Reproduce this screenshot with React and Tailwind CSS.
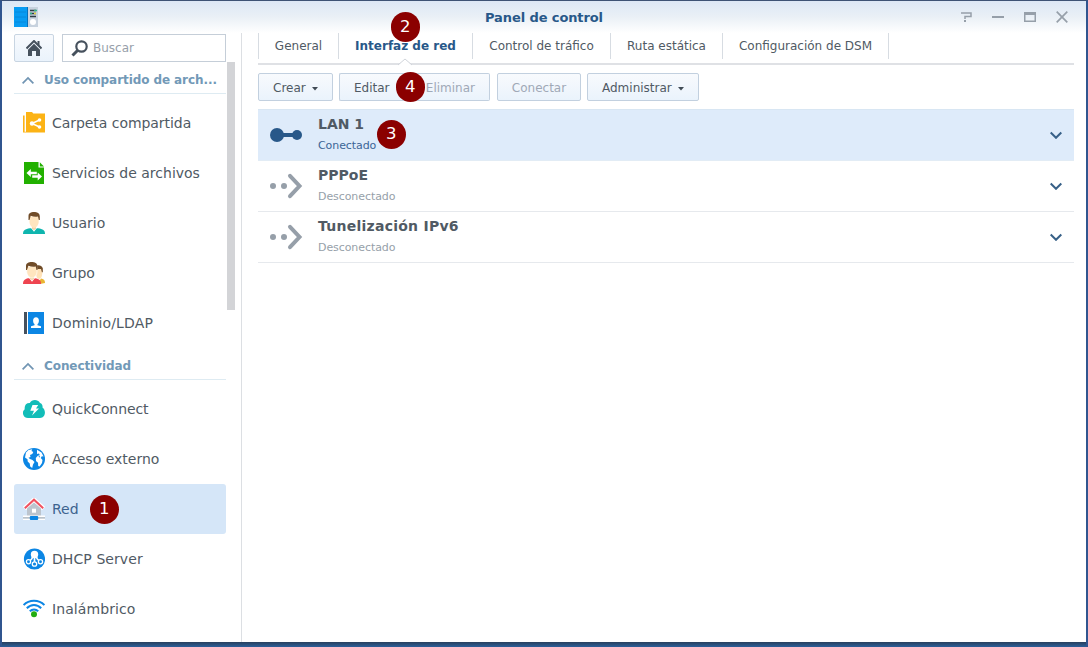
import React from "react";

const badgeBase =
  "absolute z-10 flex h-[29.5px] w-[29.5px] items-center justify-center rounded-full bg-[#8b0000] text-[16.5px] leading-none font-normal tracking-normal text-white";

function Badge({ n, className }) {
  return <span className={`${badgeBase} ${className}`}>{n}</span>;
}

function Svg({ children }) {
  return (
    <svg width="22" height="22" viewBox="0 0 22 22" className="block shrink-0">
      {children}
    </svg>
  );
}

const FolderIcon = () => (
  <Svg>
    <path d="M0 3.500h1.600v16.200H22V20.500H0z" fill="#fcb315" />
    <path d="M3 0h6l1.300 1.500H22v18.500H3z" fill="#fcb315" />
    <path d="M16.500 8L9 11.500l7.500 3.500" stroke="#fff" strokeWidth="1.500" fill="none" />
    <circle cx="9" cy="11.500" r="2.200" fill="#fff" />
    <circle cx="16.500" cy="8" r="1.800" fill="#fff" />
    <circle cx="16.500" cy="15" r="1.800" fill="#fff" />
  </Svg>
);

const FileServiceIcon = () => (
  <Svg>
    <path d="M1 0h14.500v5.500H21V22H1z" fill="#22b000" />
    <path d="M16.800.3L21 4.500h-4.200z" fill="#22b000" />
    <path d="M3.500 11l4.300-4v2.700h6v2.500h-6V15z" fill="#fff" />
    <path d="M19 14.500l-4.300-4v2.700H9.200v2.600h5.500v2.700z" fill="#fff" />
  </Svg>
);

const UserIcon = () => (
  <Svg>
    <path d="M0 22c0-3.800 2-4.900 7-5.700h8c5 .8 7 1.900 7 5.700z" fill="#0fb5ae" />
    <path d="M8 16l3 3.800 3-3.800-1-1H9z" fill="#fff" />
    <path d="M9 13h4v3.300L11 18.500l-2-2.200z" fill="#f3d3a6" />
    <path d="M6.500 4.500h9.200v5.300c0 3.200-2.300 6.200-4.600 6.200s-4.600-3-4.600-6.200z" fill="#ffe5bf" />
    <path d="M5.500 8V4C5.500 1 8 0 11 0s5.800 1 5.800 4.500V8h-1l-.8-3.500c-2.500.5-5 .2-7.300-.7L6.500 8z" fill="#704c28" />
  </Svg>
);

const GroupIcon = () => (
  <Svg>
    <path d="M17 22v-4l1-1.500c2.500.8 4 1.500 4 4v.5z" fill="#e9b532" />
    <path d="M13 6h6.300v5c0 3-1.300 6-3.300 6s-3-3-3-6z" fill="#ffe2b8" />
    <path d="M14 3.400c2-.6 5 0 5.800 2.800v4h-.9L18 7h-4z" fill="#704c28" />
    <path d="M0 22c0-3.800 2-4.900 5-5.700h7c4.500.8 6 1.900 6 5.700z" fill="#ee4450" />
    <path d="M6 16l3 3.800 3-3.800-1-1H7z" fill="#fff" />
    <path d="M7 13h4v3.300l-2 2.200-2-2.200z" fill="#f3d3a6" />
    <path d="M3.800 4.500h10.200v5.300c0 3.200-2.500 6.200-5.100 6.200S3.800 13 3.800 9.800z" fill="#ffe5bf" stroke="#fff" strokeWidth=".6" />
    <path d="M3 8V4c0-3 2.700-4 5.700-4s5.800 1 5.800 4.500V8h-1l-.8-3.500c-2.500.5-5 .2-7.300-.7L4 8z" fill="#704c28" />
  </Svg>
);

const DomainIcon = () => (
  <Svg>
    <path d="M1 0h3v22H1z" fill="#46515d" />
    <path d="M5 0h16v22H5z" fill="#0c86e4" />
    <ellipse cx="13" cy="8.800" rx="2.900" ry="3.500" fill="#fff" />
    <path d="M11.500 11h3v2.300l3.500 1V16H8v-1.700l3.500-1z" fill="#fff" />
  </Svg>
);

const QuickConnectIcon = () => (
  <Svg>
    <path
      d="M5 20a5 5 0 0 1-3.300-8.800C1.200 7 3.500 4.800 6.800 5 8.500 1.500 14.500.7 17 5c2.200.7 2.800 2.500 2.500 4.500C23.500 12.500 22.500 20 17 20z"
      fill="#12bdb8"
    />
    <path d="M9.500 7h5.700L13 10.500h3L9 17.500l2-4.800H7.300z" fill="#fff" />
  </Svg>
);

const GlobeIcon = () => (
  <Svg>
    <circle cx="11" cy="11" r="11" fill="#0c86e4" />
    <path d="M3 4.500L5.500 2l3.700-.8L8.500 3l1.800 1-1 2-2.300 1 .5 2-2 .8 1.500 1.200 2.500 1 2 2-1.500 2.500-.8 3.500-2-1.500-.5-3-2-2-.2-2.300L2 9.500z" fill="#fff" />
    <path d="M14 1.700l4.500 2.800 2 4-1.700-.3-1 1.800 1.700 2-.5 3-2.400 3.500-1.400-.5-.2-3.200-2-1.800-.2-3 2-2.300 2-.5-.8-1.700-2 .5z" fill="#fff" />
    <path d="M15.500 8l1.500.3-.5 1.500z" fill="#0c86e4" />
  </Svg>
);

const NetworkIcon = () => (
  <Svg>
    <path d="M1.500 10.500L11 1.700l9.500 8.800" stroke="#fff" strokeWidth="4.500" fill="none" />
    <path d="M4 10.500L11 4.500l7 6V18H4z" fill="#bcc4cd" />
    <path d="M1.800 10.300L11 1.700l9.200 8.600" stroke="#f15260" strokeWidth="2" fill="none" />
    <path d="M9 10.700h4v4H9z" fill="#fff" />
    <path d="M0 17.500h22V22H0z" fill="#fff" />
    <path d="M0 19h22v1.700H0z" fill="#b9c2ca" />
    <rect x="6.800" y="18" width="8.400" height="4" rx="1" fill="#0c86e4" />
  </Svg>
);

const DhcpIcon = () => (
  <Svg>
    <circle cx="11.500" cy="11" r="10.600" fill="#0c86e4" />
    <circle cx="11.500" cy="6.500" r="3.700" fill="#fff" />
    <path d="M9.500 8.500c0 3-1.500 3.500-3 4.500M11.500 9v6M13.500 8.500c0 3 1.500 3.500 3 4.500" stroke="#fff" strokeWidth="1.700" fill="none" />
    <g fill="#0c86e4" stroke="#fff" strokeWidth="1.300">
      <circle cx="5.500" cy="13.700" r="2.100" />
      <circle cx="11.500" cy="16" r="2.200" />
      <circle cx="17.500" cy="13.700" r="2.100" />
    </g>
  </Svg>
);

const WifiIcon = () => (
  <Svg>
    <g fill="none" stroke="#0c86e4" strokeWidth="2">
      <path d="M.6 7C6 1.200 16 1.200 21.400 7" />
      <path d="M3.800 10.300C8 6 14 6 18.200 10.300" />
      <path d="M6.800 13.300c2.500-2.500 6-2.500 8.400 0" />
    </g>
    <circle cx="11" cy="16.200" r="3" fill="#22ac10" />
  </Svg>
);

function SectionHeader({ children }) {
  return (
    <div className="mb-1 flex h-8 items-center border-b border-[#deebf2] pt-[5px] pl-2">
      <svg width="12" height="8" viewBox="0 0 12 8" className="mr-[10px] shrink-0">
        <path d="M.6 7.300L6 1.900l5.400 5.400" fill="none" stroke="#7195b3" strokeWidth="1.800" />
      </svg>
      <span className="text-[12px] font-bold tracking-[-0.08px] whitespace-nowrap text-[#7299b7]">{children}</span>
    </div>
  );
}

function NavItem({ icon, children, active, spacing = "", badge }) {
  return (
    <div
      className={`relative flex h-[50px] items-center rounded-[3px] pl-[9px] ${
        active ? "bg-[#d5e6f8] text-[#3d638f]" : "text-[#505a64]"
      }`}
    >
      {icon}
      <span className={`ml-[7px] text-[14px] whitespace-nowrap ${spacing}`}>{children}</span>
      {badge}
    </div>
  );
}

function Tab({ children, width, active, badge }) {
  return (
    <div className={`relative flex h-[26px] items-center justify-center border-r border-[#d7dce2] ${width}`}>
      <span className={`whitespace-nowrap ${active ? "font-bold text-[#285889]" : "text-[#505a64]"}`}>{children}</span>
      {active && (
        <svg width="14" height="8" viewBox="0 0 14 8" className="absolute -bottom-[7px] left-[59px]">
          <path d="M0 7.500L7 1l7 6.500z" fill="#fff" />
          <path d="M0 7L7 1l7 6" fill="none" stroke="#d0d4da" />
        </svg>
      )}
      {badge}
    </div>
  );
}

const buttonBase =
  "relative flex h-7 items-center border border-[#c2d0df] bg-linear-to-b from-[#f8fafd] to-[#eaf3fc] pt-px whitespace-nowrap";

const Caret = () => (
  <svg width="6" height="4" viewBox="0 0 6 4" className="mt-[3px] ml-[6px] shrink-0">
    <path d="M0 0h6L3 3.500z" fill="#414b55" />
  </svg>
);

const Connected = () => (
  <svg width="34" height="28" viewBox="0 0 34 28" className="block">
    <path d="M8 14h20" stroke="#285889" strokeWidth="4" />
    <circle cx="8" cy="14" r="7" fill="#285889" />
    <circle cx="28" cy="14" r="5" fill="#285889" />
  </svg>
);

const Disconnected = () => (
  <svg width="34" height="28" viewBox="0 0 34 28" className="block">
    <circle cx="4" cy="14" r="3" fill="#969fa9" />
    <circle cx="15" cy="14" r="3" fill="#969fa9" />
    <path d="M21 3.800L30.500 14 21 24.200" fill="none" stroke="#969fa9" strokeWidth="4" strokeLinecap="round" />
  </svg>
);

function InterfaceRow({ name, status, connected, spacing = "", badge }) {
  return (
    <div
      className={`relative flex h-[51px] items-center border-b pr-3 pl-[11px] ${
        connected ? "border-[#e2ecf5] bg-[#deebfa]" : "border-[#e6e9ed]"
      }`}
    >
      <div className="w-[49px]">{connected ? <Connected /> : <Disconnected />}</div>
      <div className="flex flex-1 flex-col">
        <span className={`text-[14px] leading-[21px] font-bold text-[#505a64] ${spacing}`}>{name}</span>
        <span
          className={`text-[11px] leading-[21px] tracking-[-0.08px] ${connected ? "text-[#3b6596]" : "text-[#969fa9]"}`}
        >
          {status}
        </span>
      </div>
      <svg width="12" height="8" viewBox="0 0 12 8">
        <path d="M.7 1.500L6 6.800l5.300-5.300" fill="none" stroke="#376087" strokeWidth="2" />
      </svg>
      {badge}
    </div>
  );
}

function TitleBar() {
  return (
    <header className="flex h-8 shrink-0 items-center bg-linear-to-b from-[#dce7f5] via-[#eaf0f6] to-white pr-[18px] pl-3">
      <svg width="24" height="20" viewBox="0 0 24 20">
        <path d="M0 0h13v20H0z" fill="#079bf2" />
        <path d="M13 0h1v20h-1z" fill="#056fba" />
        <path d="M14 0h10v20H14z" fill="#c7d2de" />
        <path d="M1 5h11M1 10h11M1 15h11" stroke="#0788da" />
        <path d="M16 3.500h6M16 6.500h6M16 9.500h6" stroke="#303c46" strokeWidth="1.500" />
        <path d="M20 3.500h3M16 6.500h2" stroke="#32b58b" strokeWidth="1.500" />
        <path d="M20 6.500h2" stroke="#e2d33e" strokeWidth="1.500" />
        <circle cx="19" cy="15" r="3" fill="#fff" />
      </svg>
      <h1 className="flex-1 pt-px pl-[90px] text-center text-[13px] font-bold text-[#285889]">
        <span className="tracking-[-0.1px]">Panel de control</span>
      </h1>
      <div className="flex items-center gap-5 text-[#969fa9]">
        <svg width="12" height="12" viewBox="0 0 12 12" className="block" fill="none" stroke="currentColor">
          <path d="M1 2h10v3.500H5V8" strokeWidth="1.500" />
          <path d="M4 10h2" strokeWidth="2" />
        </svg>
        <svg width="12" height="12" viewBox="0 0 12 12" className="block">
          <path d="M0 5h12v2H0z" fill="currentColor" />
        </svg>
        <svg width="12" height="12" viewBox="0 0 12 12" className="block">
          <path d="M0 1h12v10H0zM1.500 4v5.500h9V4z" fill="currentColor" fillRule="evenodd" />
        </svg>
        <svg width="12" height="12" viewBox="0 0 12 12" className="block">
          <path d="M.7.7l10.600 10.600M11.300.7L.7 11.300" stroke="currentColor" strokeWidth="1.700" />
        </svg>
      </div>
    </header>
  );
}

function Sidebar() {
  return (
    <aside className="flex w-[240px] shrink-0 flex-col border-r border-[#dcdfe3] pl-3">
      <div className="flex h-[29px] pt-px">
        <button className="flex h-7 w-10 items-center justify-center rounded-[2px] border border-[#c8d5e2] bg-linear-to-b from-[#f8fafd] to-[#eaf3fc]">
          <svg width="16" height="16" viewBox="0 0 16 16">
            <path d="M.5 8.500L8 1l7.500 7.500" fill="none" stroke="#46515d" strokeWidth="2" />
            <path d="M2 9.700l6-6 6 6V16h-4v-5H6v5H2zM11.500 1h2v4h-2z" fill="#46515d" />
          </svg>
        </button>
        <div className="ml-2 flex h-7 w-[164px] items-center border border-[#c5ced8] bg-white pl-2">
          <svg width="17" height="17" viewBox="0 0 17 17" fill="none" stroke="#46515d">
            <circle cx="10.500" cy="6.500" r="5.200" strokeWidth="2.200" />
            <path d="M6.500 10.500L1.500 15.500" strokeWidth="3" />
          </svg>
          <span className="ml-[5px] text-[12px] text-[#979faa]">Buscar</span>
        </div>
      </div>
      <div className="flex">
        <nav className="w-[212px]">
          <SectionHeader>Uso compartido de arch...</SectionHeader>
          <NavItem icon={<FolderIcon />} spacing="tracking-[-0.05px]">Carpeta compartida</NavItem>
          <NavItem icon={<FileServiceIcon />}>Servicios de archivos</NavItem>
          <NavItem icon={<UserIcon />}>Usuario</NavItem>
          <NavItem icon={<GroupIcon />}>Grupo</NavItem>
          <NavItem icon={<DomainIcon />} spacing="tracking-[0.15px]">Dominio/LDAP</NavItem>
          <SectionHeader>Conectividad</SectionHeader>
          <NavItem icon={<QuickConnectIcon />} spacing="tracking-[-0.08px]">QuickConnect</NavItem>
          <NavItem icon={<GlobeIcon />}>Acceso externo</NavItem>
          <NavItem icon={<NetworkIcon />} active badge={<Badge n="1" className="top-[10.5px] left-[75.5px]" />}>
            Red
          </NavItem>
          <NavItem icon={<DhcpIcon />} spacing="tracking-[0.08px]">DHCP Server</NavItem>
          <NavItem icon={<WifiIcon />} spacing="tracking-[0.08px]">Inalámbrico</NavItem>
        </nav>
        <div className="ml-px h-[248px] w-2 bg-[#d3d4d7]" />
      </div>
    </aside>
  );
}

function MainPanel() {
  return (
    <main className="flex flex-1 flex-col pr-3 pl-4">
      <div className="flex h-8 border-b-2 border-[#dfe1e5] text-[12px]">
        <div className="h-[26px] w-px bg-[#d7dce2]" />
        <Tab width="w-20">General</Tab>
        <Tab width="w-[134px]" active badge={<Badge n="2" className="-top-[21px] left-[51.5px]" />}>
          Interfaz de red
        </Tab>
        <Tab width="w-[138px]">Control de tráfico</Tab>
        <Tab width="w-28">Ruta estática</Tab>
        <Tab width="w-[166px]">Configuración de DSM</Tab>
      </div>
      <div className="mt-2 mb-2 flex text-[12px] text-[#505a64]">
        <button className={`${buttonBase} w-[75px] rounded-[2px] pl-[14px]`}>
          Crear
          <Caret />
        </button>
        <button className={`${buttonBase} ml-[6px] w-[72px] rounded-l-[2px] border-r-0 pl-[14px]`}>
          Editar
          <Badge n="4" className="-top-[2px] left-[55.5px]" />
        </button>
        <button className={`${buttonBase} w-[79px] justify-end rounded-r-[2px] border-l-0 pr-[14px] text-[#a0a9b7]`}>
          Eliminar
        </button>
        <button className={`${buttonBase} ml-[7px] w-[84px] justify-center rounded-[2px] text-[#a0a9b7]`}>
          Conectar
        </button>
        <button className={`${buttonBase} ml-[6px] w-28 rounded-[2px] pl-[14px]`}>
          Administrar
          <Caret />
        </button>
      </div>
      <section className="border-t border-[#d8e6f3]">
        <InterfaceRow
          name="LAN 1"
          status="Conectado"
          connected
          badge={<Badge n="3" className="top-[9.5px] left-[118.5px]" />}
        />
        <InterfaceRow name="PPPoE" status="Desconectado" />
        <InterfaceRow name="Tunelización IPv6" status="Desconectado" spacing="tracking-[0.25px]" />
      </section>
    </main>
  );
}

export default function App() {
  return (
    <div className="flex h-[647px] w-[1088px] flex-col overflow-hidden border-x-2 border-t border-x-[#30558f] border-t-[#3d5275] bg-white font-['DejaVu_Sans',Verdana,sans-serif]">
      <TitleBar />
      <div className="flex min-h-0 flex-1">
        <Sidebar />
        <MainPanel />
      </div>
      <div className="h-[5px] shrink-0 bg-linear-to-b from-[#28405e] to-[#2a5f9a]" />
    </div>
  );
}
